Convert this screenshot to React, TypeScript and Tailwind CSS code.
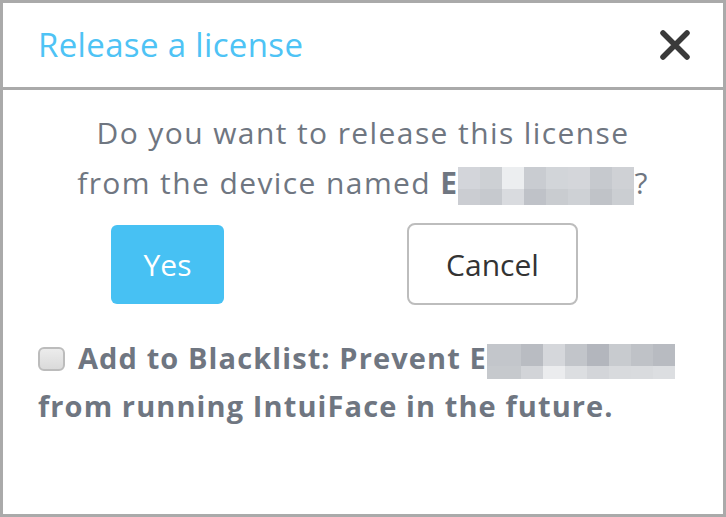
import type { FC } from 'react';

// pixelated (blurred) name placeholder
const Mosaic: FC<{ top: string[]; bottom: string[]; topH: string; bottomH: string; first?: string }> = ({
  top,
  bottom,
  topH,
  bottomH,
  first = 'w-[22px]',
}) => (
  <span className="inline-flex flex-col align-middle tracking-normal">
    <span className="flex">
      {top.map((c, i) => (
        <span key={i} className={`${i === 0 ? first : 'w-[22px]'} ${topH}`} style={{ backgroundColor: c }} />
      ))}
    </span>
    <span className="flex">
      {bottom.map((c, i) => (
        <span key={i} className={`${i === 0 ? first : 'w-[22px]'} ${bottomH}`} style={{ backgroundColor: c }} />
      ))}
    </span>
  </span>
);

const CloseIcon: FC = () => (
  <svg width="34" height="34" viewBox="0 0 34 34" fill="none">
    <path d="M5 5 L29 29 M29 5 L5 29" stroke="#3a3a3a" strokeWidth="5.5" strokeLinecap="round" />
  </svg>
);

export default function App() {
  return (
    <div
      className="w-[726px] h-[517px] bg-white border-[3px] border-[#aaaaaa] flex flex-col"
      style={{ fontFamily: '"Open Sans", Lato, sans-serif' }}
    >
      <div className="h-[87px] shrink-0 flex items-center justify-between pl-[35px] pr-[31px] border-b-[3px] border-[#aaaaaa]">
        <h1 className="text-[33px] text-[#4ec3f5] tracking-[0.35px]">Release a license</h1>
        <CloseIcon />
      </div>

      <div className="flex flex-col pt-[18px] px-[35px]">
        <p className="text-center text-[30px] leading-[50px] text-[#6f7681] tracking-[1.4px]">
          Do you want to release this license
          <br />
          from the device named <span className="font-bold">E</span>
          <Mosaic
            topH="h-[22px]"
            bottomH="h-[16px]"
            top={['#d3d5da', '#cdd0d4', '#eceef0', '#c9ccd1', '#d2d5d9', '#d4d6da', '#c6c9ce', '#cfd1d5']}
            bottom={['#cbcdd2', '#c6c9ce', '#d9dbdf', '#bfc2c8', '#c9ccd0', '#ced1d5', '#c0c3c8', '#cbced2']}
          />
          ?
        </p>

        <div className="flex items-center mt-[15px] pl-[73px]">
          <button className="w-[113px] h-[79px] rounded-[6px] bg-[#47c1f3] text-white text-[30px]">Yes</button>
          <button className="ml-[183px] w-[171px] h-[82px] rounded-[8px] border-2 border-[#bdbdbd] bg-white text-[#333333] text-[30px]">
            Cancel
          </button>
        </div>

        <p className="mt-[29px] text-[29px] leading-[48px] font-bold text-[#6f7681] tracking-[1.1px]">
          <span className="inline-block align-middle mr-[13px] mb-[4px] w-[27px] h-[24px] rounded-[6px] border-2 border-[#bcbcbc] bg-gradient-to-b from-[#ececec] to-[#dadada]" />
          Add to Blacklist: Prevent E
          <Mosaic
            first="w-[34px]"
            topH="h-[22px]"
            bottomH="h-[13px]"
            top={['#c3c6cb', '#b9bcc2', '#d5d7db', '#c2c5ca', '#b3b6bd', '#c8cbcf', '#bfc2c7', '#b8bbc1']}
            bottom={['#c6c9cd', '#d2d4d8', '#ebecee', '#dcdee1', '#d3d5d9', '#d8dadd', '#d9dbde', '#dcdee1']}
          />
          <br />
          from running IntuiFace in the future.
        </p>
      </div>
    </div>
  );
}
